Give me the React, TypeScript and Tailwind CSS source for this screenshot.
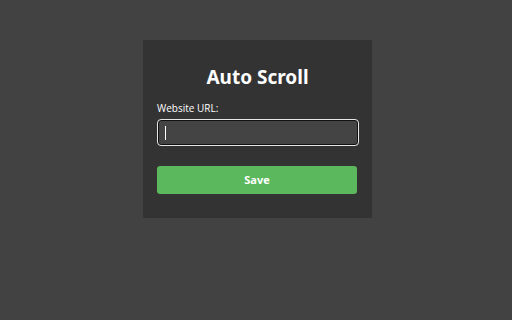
import React from 'react';

export default function App() {
  return (
    <div className="min-h-screen w-full bg-[#424242] pt-[40px] flex justify-center" style={{ fontFamily: '"Open Sans", "Noto Sans", sans-serif' }}>
      <div className="ml-[3px] w-[229px] h-[178px] bg-[#333333] px-[14px] pt-[24px] flex flex-col">
        <h1 className="text-center text-white font-bold text-[19px] leading-[26px] mb-[11px]" style={{ fontFamily: '"Noto Sans", sans-serif' }}>
          Auto Scroll
        </h1>
        <label className="text-[10px] leading-[14px] text-white mb-[4px]">Website URL:</label>
        <div className="w-[202px] h-[27px] rounded-[4px] border border-[#e6e6e6] shadow-[inset_0_0_0_1px_#111111] bg-[#444444] flex items-center pl-[7px]">
          <span className="w-px h-[14px] bg-white" />
        </div>
        <button className="mt-[20px] w-[200px] h-[28px] rounded-[3px] bg-[#5cb85c] text-white text-[11px] font-bold">
          Save
        </button>
      </div>
    </div>
  );
}
